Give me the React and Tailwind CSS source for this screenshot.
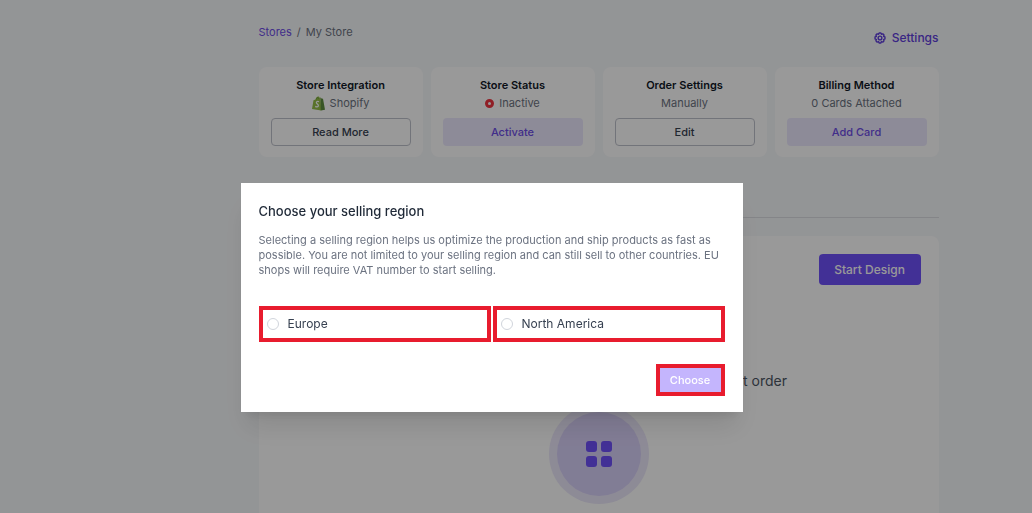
import { useState } from "react";

function SettingsIcon() {
  return (
    <svg
      viewBox="0 0 24 24"
      className="w-[14px] h-[14px]"
      fill="none"
      stroke="currentColor"
      strokeWidth="2.4"
      strokeLinejoin="round"
    >
      <path d="M9.500 4.300 10.500 2h3l1 2.300 2.300-.9 2.100 2.100-.8 2.400 2.400 1v3.200l-2.400 1.100.8 2.300-2.100 2.200-2.300-.9-1 2.400h-3l-1-2.400-2.400.9L5 15.500l.9-2.300-2.400-1.100V8.900l2.400-1L5 5.500l2.100-2.100z" transform="translate(0 1.400)" />
      <circle cx="12" cy="12" r="3.200" />
    </svg>
  );
}

function ShopifyIcon() {
  return (
    <svg viewBox="0 0 26 30" className="w-[13px] h-[15px]">
      <path
        d="M3 8.500 7 7.200C7.800 3.500 10 1 12.500 1c1.300 0 2.200 1 2.600 2.500L17 3l1.500 26L0 26z"
        fill="#95bf47"
      />
      <path d="m17 3 2 2 3 .5 4 22L17.500 29z" fill="#5e8e3e" />
      <path
        d="M8.500 7c.6-2.500 2-4 3.400-4.300.8.8 1 2 1 3.100"
        fill="none"
        stroke="#5e8e3e"
        strokeWidth="1.200"
      />
      <path
        d="M14 11.500c-2.500-1.200-5.300-.6-5.300 1.700 0 2.700 4.300 2.800 4 6-.3 2.800-3.400 3.300-6.200 1.500"
        fill="none"
        stroke="#fff"
        strokeWidth="2.500"
      />
    </svg>
  );
}

const cards = [
  {
    title: "Store Integration",
    text: "Shopify",
    icon: <ShopifyIcon />,
    button: "Read More",
  },
  {
    title: "Store Status",
    text: "Inactive",
    icon: (
      <span className="w-[9px] h-[9px] rounded-full border-3 border-[#f03440] bg-white" />
    ),
    button: "Activate",
    primary: true,
  },
  { title: "Order Settings", text: "Manually", button: "Edit" },
  {
    title: "Billing Method",
    text: "0 Cards Attached",
    button: "Add Card",
    primary: true,
  },
];

function StoreCard({ card }) {
  return (
    <div className="bg-white rounded-lg px-3 pt-[9px] pb-[11px] text-center text-[11px] leading-[18px]">
      <h3 className="font-semibold text-[#111827]">{card.title}</h3>
      <p className="flex items-center justify-center gap-[5px] text-[#6b7280]">
        {card.icon}
        {card.text}
      </p>
      <button
        type="button"
        className={
          card.primary
            ? "mt-[6px] w-full h-7 rounded-sm font-medium bg-[#ece8fd] text-[#6d4de6]"
            : "mt-[6px] w-full h-7 rounded-sm font-medium border border-[#bfc2cc] text-[#374151]"
        }
      >
        {card.button}
      </button>
    </div>
  );
}

function RegionModal() {
  const [region, setRegion] = useState("");
  return (
    <div
      role="dialog"
      aria-modal="true"
      aria-labelledby="region-title"
      className="w-full max-w-[502px] bg-white shadow-xl px-[18px] pt-[18px] pb-4"
    >
      <h2
        id="region-title"
        className="text-[13px] leading-5 font-medium text-[#1f2937]"
      >
        Choose your selling region
      </h2>
      <p className="mt-3 text-[11px] leading-[15px] text-[#6b7280]">
        Selecting a selling region helps us optimize the production and ship
        products as fast as possible. You are not limited to your selling region
        and can still sell to other countries. EU shops will require VAT number
        to start selling.
      </p>
      <div className="mt-7 grid grid-cols-2 gap-0.5">
        {["Europe", "North America"].map((name) => (
          <label
            key={name}
            className="flex items-center gap-[9px] h-9 px-1 border-4 border-[#e81c2e] text-[12px] text-[#374151]"
          >
            <input
              type="radio"
              name="region"
              value={name}
              checked={region === name}
              onChange={(e) => setRegion(e.target.value)}
              className="appearance-none w-3 h-3 rounded-full border border-gray-300 checked:border-4 checked:border-[#6f50fa]"
            />
            {name}
          </label>
        ))}
      </div>
      <div className="mt-[22px] flex justify-end">
        <button
          type="button"
          className="h-8 w-[69px] border-4 border-[#e81c2e] bg-[#c4b5fd] text-[11px] font-medium text-white"
        >
          Choose
        </button>
      </div>
    </div>
  );
}

export default function App() {
  return (
    <div className="h-screen overflow-hidden bg-[#f6f8fa] font-['Inter',sans-serif]">
      <main className="h-full pl-[165px]">
        <div className="h-full max-w-[680px] mx-auto flex flex-col">
          <div className="flex justify-between items-start pt-6">
            <nav className="flex gap-[5px] text-[11px] leading-4 text-[#6b7280]">
              <a href="#" className="text-[#6d4de6]">
                Stores
              </a>
              <span>/</span>
              <span>My Store</span>
            </nav>
            <a
              href="#"
              className="mt-1 flex items-center gap-[5px] text-[12px] leading-5 font-medium text-[#6040dc]"
            >
              <SettingsIcon />
              Settings
            </a>
          </div>
          <div className="mt-[19px] grid grid-cols-4 gap-2">
            {cards.map((card) => (
              <StoreCard key={card.title} card={card} />
            ))}
          </div>
          <hr className="mt-[60px] border-[#dcdee3]" />
          <section className="mt-[18px] flex-1 bg-white rounded-t-lg px-[18px] pt-[18px]">
            <div className="flex justify-end">
              <button
                type="button"
                className="h-[31px] w-[102px] rounded-sm bg-[#6f50fa] text-[12px] font-medium text-white"
              >
                Start Design
              </button>
            </div>
            <p className="mt-[86px] text-center text-[14px] leading-5 text-[#4b5563]">
              Design your first products and get your store&apos;s first order
            </p>
            <div className="mt-[13px] mx-auto w-[100px] h-[100px] rounded-full bg-[#ece8fb] p-2">
              <div className="w-full h-full rounded-full bg-[#d8d0f8] flex items-center justify-center">
                <div className="grid grid-cols-2 gap-1">
                  <span className="w-[11px] h-[11px] rounded-[3px] bg-[#6f50fa]" />
                  <span className="w-[11px] h-[11px] rounded-[3px] bg-[#6f50fa]" />
                  <span className="w-[11px] h-[11px] rounded-[3px] bg-[#6f50fa]" />
                  <span className="w-[11px] h-[11px] rounded-[3px] bg-[#6f50fa]" />
                </div>
              </div>
            </div>
          </section>
        </div>
      </main>
      <div className="fixed inset-0 bg-black/40 flex items-start justify-center pt-[183px] pr-[49px]">
        <RegionModal />
      </div>
    </div>
  );
}
